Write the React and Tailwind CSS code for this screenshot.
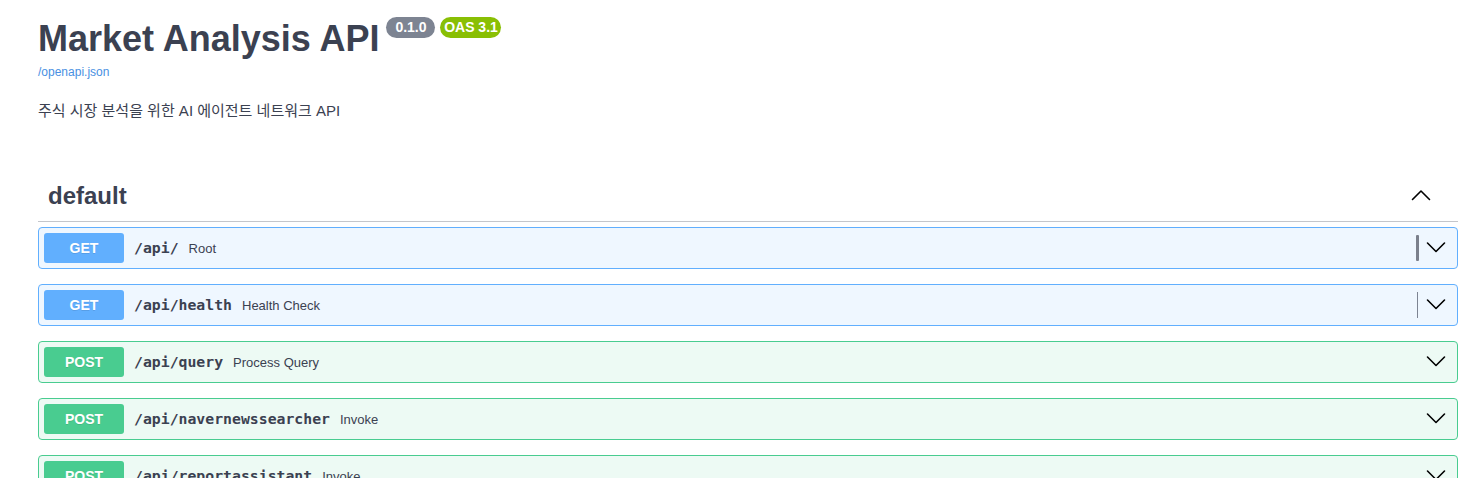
import React from 'react';

const sans = { fontFamily: '"Liberation Sans", "Noto Sans CJK KR", Arial, sans-serif' };
const mono = { fontFamily: '"DejaVu Sans Mono", "Liberation Mono", monospace' };

const ops = [
  { method: 'GET', path: '/api/', summary: 'Root', bar: 'thick' },
  { method: 'GET', path: '/api/health', summary: 'Health Check', bar: 'thin' },
  { method: 'POST', path: '/api/query', summary: 'Process Query' },
  { method: 'POST', path: '/api/navernewssearcher', summary: 'Invoke' },
  { method: 'POST', path: '/api/reportassistant', summary: 'Invoke' },
  { method: 'POST', path: '/api/marketanalyst', summary: 'Invoke' },
];

const styles = {
  GET: { row: 'border-[#61affe] bg-[#eff7ff]', badge: 'bg-[#61affe]' },
  POST: { row: 'border-[#49cc90] bg-[#edfaf4]', badge: 'bg-[#49cc90]' },
};

const Chevron = ({ up }) => (
  <svg width="20" height="20" viewBox="0 0 20 20" fill="none" stroke="#000" strokeWidth="1.6" strokeLinecap="round" strokeLinejoin="round">
    {up ? <polyline points="1.5,14.5 10,6 18.5,14.5" /> : <polyline points="1.5,6 10,14.5 18.5,6" />}
  </svg>
);

const Operation = ({ op }) => {
  const s = styles[op.method];
  return (
    <div className={`mb-[15px] flex h-[42px] items-center rounded-[4px] border p-[5px] ${s.row}`}>
      <span
        className={`flex h-[30px] w-[80px] shrink-0 items-center justify-center rounded-[3px] text-[14px] font-bold text-white ${s.badge}`}
        style={{ textShadow: '0 1px 0 rgba(0,0,0,.1)' }}
      >
        {op.method}
      </span>
      <span className="px-[10px] pt-[1px] text-[14.8px] font-semibold text-[#3b4151]" style={mono}>
        {op.path}
      </span>
      <span className="flex-1 pt-[2px] text-[13px] text-[#3b4151]">{op.summary}</span>
      {op.bar === 'thick' && <span className="mr-[7px] h-[26px] w-[3px] rounded-[1px] bg-[#7b808c]" />}
      {op.bar === 'thin' && <span className="mr-[8px] h-[26px] w-px bg-[#7d8492]" />}
      <span className="mr-[6px] -mt-[3px] flex">
        <Chevron />
      </span>
    </div>
  );
};

export default function App() {
  return (
    <div className="min-h-screen bg-white" style={sans}>
      <div className="ml-[38px] w-[1420px] pt-[17px]">
        <div className="flex items-start">
          <h1 className="text-[36px] font-bold leading-[44px] text-[#3b4151]">Market Analysis API</h1>
          <span className="ml-[7px] w-[49px] rounded-full bg-[#7d8492] text-center text-[14px] font-bold leading-[21px] text-white">0.1.0</span>
          <span className="ml-[5px] w-[61px] rounded-full bg-[#89bf04] text-center text-[14px] font-bold leading-[21px] text-white">OAS 3.1</span>
        </div>
        <a className="mt-[3px] block text-[12px] leading-[16px] text-[#4990e2]">/openapi.json</a>
        <p className="mt-[21px] text-[15px] leading-[20px] text-[#3b4151]">주식 시장 분석을 위한 AI 에이전트 네트워크 API</p>

        <div className="mt-[50px] flex h-[51px] items-center border-b border-[#c4c6cb] pl-[10px] pr-[27px]">
          <h3 className="flex-1 text-[24px] font-bold text-[#3b4151]">default</h3>
          <span className="-mt-[3px] flex">
            <Chevron up />
          </span>
        </div>
        <div className="mt-[5px]">
          {ops.map((op) => (
            <Operation key={op.path} op={op} />
          ))}
        </div>
      </div>
    </div>
  );
}
